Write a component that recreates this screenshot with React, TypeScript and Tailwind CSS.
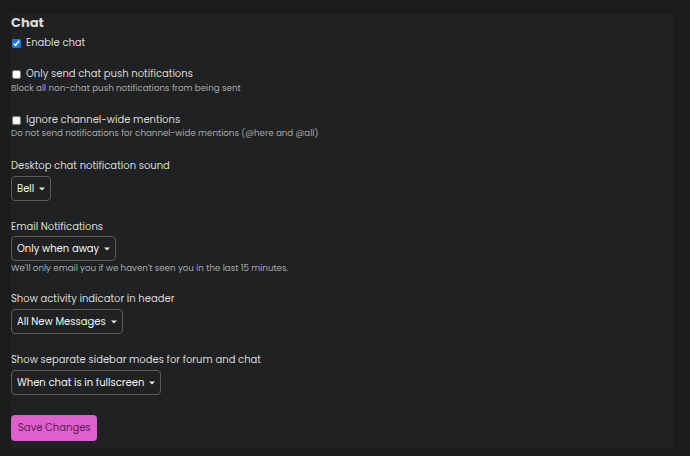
import React from "react";

function Caret() {
  return (
    <svg width="6" height="4" viewBox="0 0 6 4" className="ml-[5px]">
      <path d="M0 0.5 L6 0.5 L3 3.5 Z" fill="#e8e8e8" />
    </svg>
  );
}

function Select({ label, mt }: { label: string; mt: string }) {
  return (
    <div className={`flex ${mt}`}>
      <div className="flex h-[25px] items-center rounded-[4px] border border-[#5c5c60] pl-[5px] pr-[5px] text-[10px] leading-[14px] text-[#f4f4f4]">
        <span>{label}</span>
        <Caret />
      </div>
    </div>
  );
}

function Check({ checked, label }: { checked?: boolean; label: string }) {
  return (
    <label className="flex h-[14px] items-center gap-[5px] text-[10px] leading-[14px] text-[#d8d8d8]">
      <input
        type="checkbox"
        defaultChecked={checked}
        className="m-0 ml-[1px] h-[9px] w-[9px] accent-[#1a73e8]"
      />
      <span>{label}</span>
    </label>
  );
}

export default function App() {
  const label = "h-[14px] text-[10px] leading-[14px] text-[#d8d8d8]";
  const desc = "h-[12px] text-[8.7px] leading-[12px] text-[#a8a8a8]";
  return (
    <div
      className="h-[456px] w-[690px] overflow-hidden bg-[#1c1c1e] pt-[14px]"
      style={{ fontFamily: "Poppins, 'Open Sans', 'Liberation Sans', sans-serif" }}
    >
      <div className="ml-[11px] h-[434px] w-[663px] bg-[#202123] pt-[1px]">
        <div className="h-[16px] text-[13px] font-bold leading-[16px] text-[#d8d8d8]">Chat</div>
        <div className="mt-[5px]">
          <Check checked label="Enable chat" />
        </div>
        <div className="mt-[17px]">
          <Check label="Only send chat push notifications" />
          <div className={`mt-[1px] ${desc}`}>Block all non-chat push notifications from being sent</div>
        </div>
        <div className="mt-[19px]">
          <Check label="Ignore channel-wide mentions" />
          <div className={desc}>Do not send notifications for channel-wide mentions (@here and @all)</div>
        </div>
        <div className={`mt-[20px] ${label}`}>Desktop chat notification sound</div>
        <Select mt="mt-[3px]" label="Bell" />
        <div className={`mt-[19px] ${label}`}>Email Notifications</div>
        <Select mt="mt-[2px]" label="Only when away" />
        <div className={`mt-[1px] ${desc}`}>We'll only email you if we haven't seen you in the last 15 minutes.</div>
        <div className={`mt-[18px] ${label}`}>Show activity indicator in header</div>
        <Select mt="mt-[3px]" label="All New Messages" />
        <div className={`mt-[19px] ${label}`}>Show separate sidebar modes for forum and chat</div>
        <Select mt="mt-[3px]" label="When chat is in fullscreen" />
        <div className="mt-[20px] flex">
          <button className="h-[26px] rounded-[4px] bg-[#e05fce] pl-[7px] pr-[6px] text-[10px] leading-[14px] text-[#5e1d57]">
            Save Changes
          </button>
        </div>
      </div>
    </div>
  );
}
